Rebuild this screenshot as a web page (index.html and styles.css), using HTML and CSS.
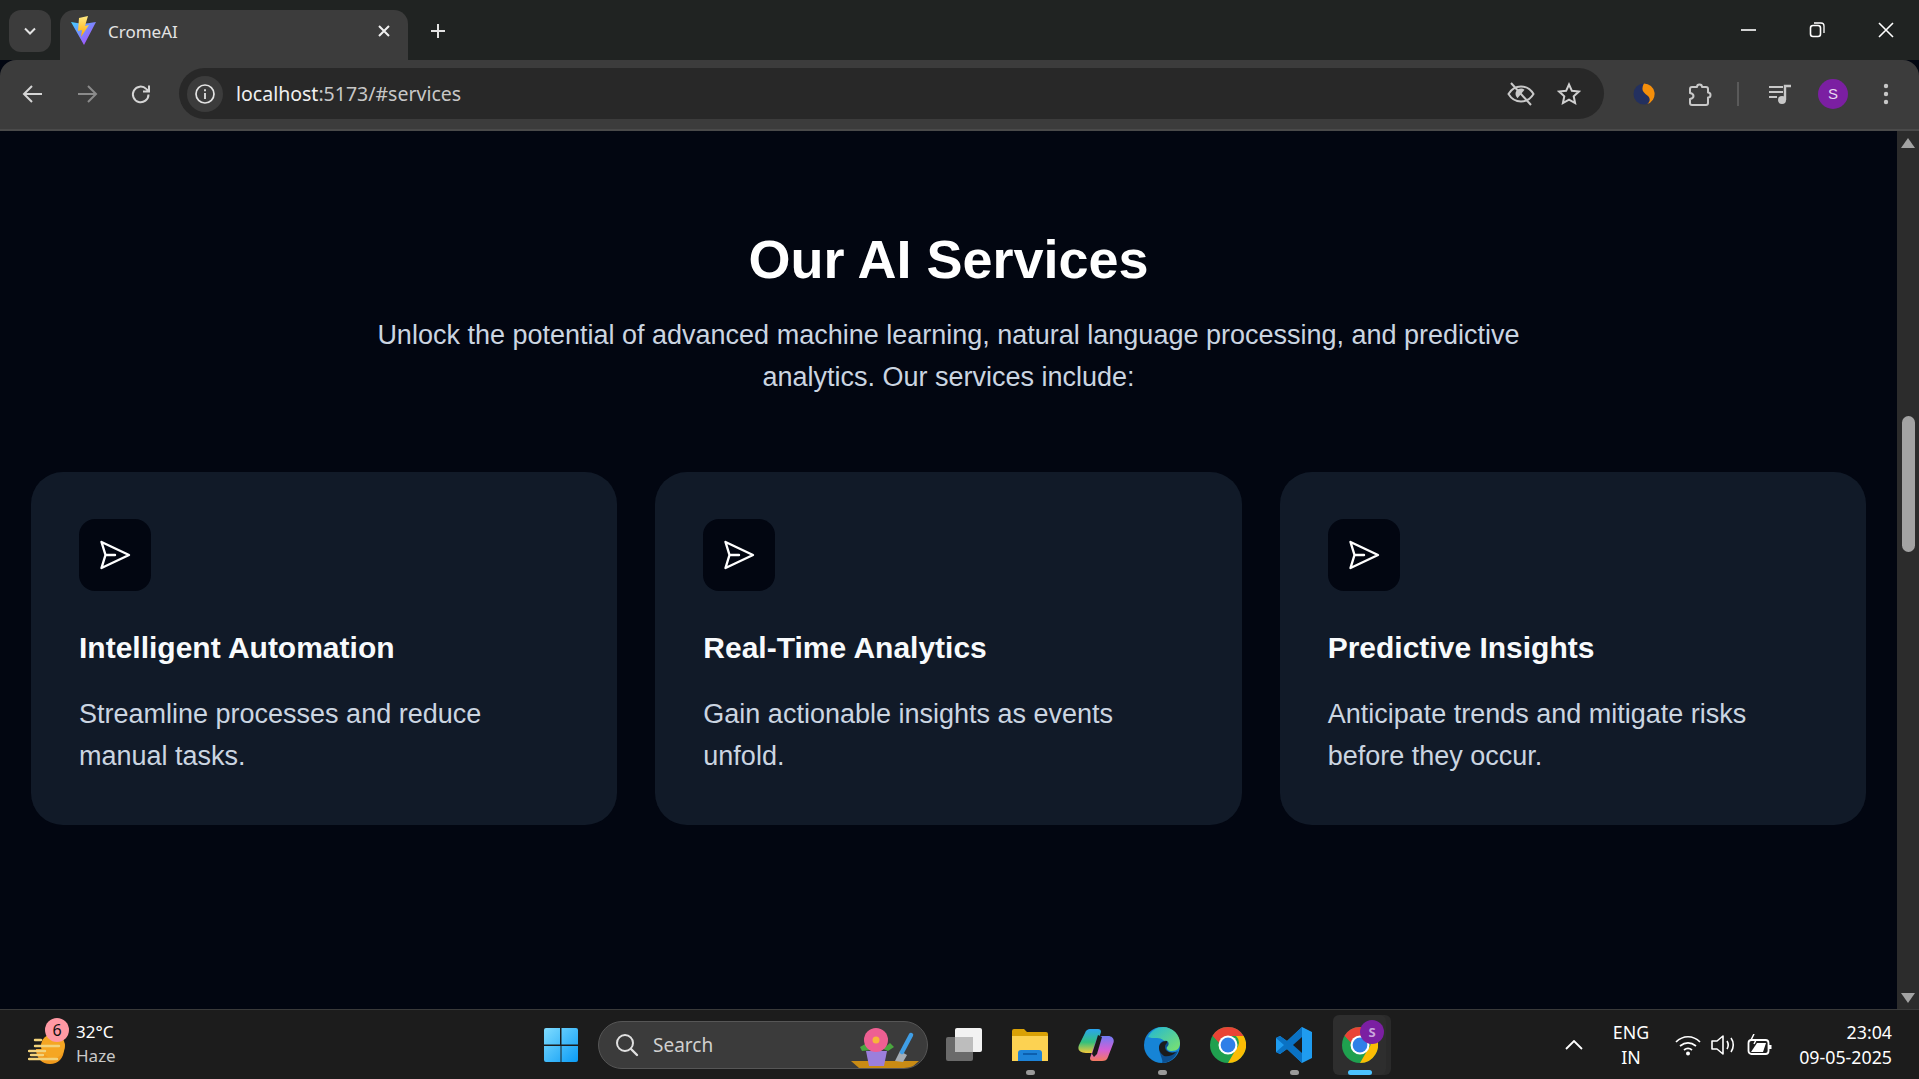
FILE: index.html
```html
<!DOCTYPE html>
<html lang="en">
<head>
    <meta charset="UTF-8">
    <title>CromeAI</title>
    <link rel="stylesheet" href="styles.css">
</head>
<body>

    <!-- Tab strip -->
    <div class="tabstrip">
        <button class="tab-search"><svg width="16" height="16" viewBox="0 0 16 16"><path d="M3 5.500l5 5 5-5" fill="none" stroke="#e3e3e3" stroke-width="2"/></svg></button>
        <div class="tab">
            <svg class="favicon" width="26" height="30" viewBox="0 0 26 30">
                <defs>
                    <linearGradient id="viteA" x1="0" y1="0" x2="1" y2="1"><stop offset="0" stop-color="#41d1ff"/><stop offset="1" stop-color="#bd34fe"/></linearGradient>
                    <linearGradient id="viteB" x1="0" y1="0" x2="0" y2="1"><stop offset="0" stop-color="#ffea83"/><stop offset="1" stop-color="#ffa800"/></linearGradient>
                </defs>
                <path d="M0 6l12 2 13-2-12 23z" fill="url(#viteA)"/>
                <path d="M17 0L8 2l-1 13 4-1-1 7 8-12-4 1 3-10z" fill="url(#viteB)"/>
            </svg>
            <span class="tab-title">CromeAI</span>
            <svg class="tab-close" width="14" height="14" viewBox="0 0 14 14"><path d="M2 2l10 10M12 2L2 12" stroke="#f0f0f0" stroke-width="2"/></svg>
        </div>
        <svg class="new-tab" width="18" height="18" viewBox="0 0 18 18"><path d="M9 2v14M2 9h14" stroke="#e3e3e3" stroke-width="2"/></svg>
        <div class="window-controls">
            <svg width="18" height="18" viewBox="0 0 18 18"><path d="M2 9h15" stroke="#fff" stroke-width="1.600"/></svg>
            <svg width="18" height="18" viewBox="0 0 18 18"><rect x="2.500" y="4.500" width="10" height="11" rx="2.500" fill="none" stroke="#fff" stroke-width="1.600"/><path d="M6 2h7a3 3 0 0 1 3 3v7" fill="none" stroke="#fff" stroke-width="1.300"/></svg>
            <svg width="18" height="18" viewBox="0 0 18 18"><path d="M2 2l14 14M16 2L2 16" stroke="#fff" stroke-width="1.600"/></svg>
        </div>
    </div>

    <!-- Toolbar -->
    <div class="toolbar">
        <svg class="nav-btn" width="22" height="22" viewBox="0 0 22 22"><path d="M20 11H3M10 3l-8 8 8 8" fill="none" stroke="#d5d5d5" stroke-width="2"/></svg>
        <svg class="nav-btn" width="22" height="22" viewBox="0 0 22 22"><path d="M2 11h17M12 3l8 8-8 8" fill="none" stroke="#8b8b8b" stroke-width="2"/></svg>
        <svg class="nav-btn" width="22" height="22" viewBox="0 0 22 22"><path d="M18.500 11.500a7.800 7.800 0 1 1-2.300-5.600L19 8.500M19 2.500v6h-6" fill="none" stroke="#d5d5d5" stroke-width="2"/></svg>
        <div class="omnibox">
            <span class="info-chip"><svg width="22" height="22" viewBox="0 0 22 22"><circle cx="11" cy="11" r="9" fill="none" stroke="#e3e3e3" stroke-width="1.700"/><path d="M11 10v6M11 6.200v2" stroke="#e3e3e3" stroke-width="1.800"/></svg></span>
            <span class="url">localhost<span class="url-rest">:5173/#services</span></span>
            <svg class="omni-eye" width="28" height="24" viewBox="0 0 28 24"><path d="M1.500 12c3-5 7-7.500 12.500-7.500S23.500 7 26.500 12c-3 5-7 7.500-12.500 7.500S4.500 17 1.500 12z" fill="none" stroke="#c8c8c8" stroke-width="2"/><path d="M8.500 12a5.500 5.500 0 0 1 9-4.200l-7 8.400a5.500 5.500 0 0 1-2-4.200z" fill="#c8c8c8"/><path d="M4 1l20 22" stroke="#c8c8c8" stroke-width="2"/></svg>
            <svg class="omni-star" width="24" height="24" viewBox="0 0 24 24"><path d="M12 2.500l2.900 6.300 6.900.8-5.100 4.700 1.400 6.800L12 17.700l-6.100 3.400 1.400-6.800L2.200 9.600l6.900-.8z" fill="none" stroke="#d0d0d0" stroke-width="2"/></svg>
        </div>
        <svg class="ext-simplenote" width="22" height="22" viewBox="0 0 22 22"><circle cx="11" cy="11" r="10.500" fill="#23305f"/><path d="M11 .5a10.500 10.500 0 0 1 3 20.600c3-2 3.500-5 1.500-7.500C13.500 11 9 9.500 9.500 5c.2-2 1-3.700 1.500-4.500z" fill="#f58f0a"/></svg>
        <svg class="ext-puzzle" width="24" height="26" viewBox="0 0 24 26"><path d="M2 8a2 2 0 0 1 2-2h5a2.500 2.500 0 0 1 5 0h4a2 2 0 0 1 2 2v3.500a2.500 2.500 0 0 1 0 5V22a2 2 0 0 1-2 2H4a2 2 0 0 1-2-2v-4c2.500-.5 3.500-1.500 3.500-3S4.500 12.500 2 12z" fill="none" stroke="#c8c8c8" stroke-width="2" stroke-linejoin="round"/></svg>
        <span class="toolbar-sep"></span>
        <svg class="ext-media" width="24" height="22" viewBox="0 0 24 22"><path d="M1 4h14M1 9h14M1 14h8" stroke="#c8c8c8" stroke-width="2"/><path d="M17 17V3h6" fill="none" stroke="#c8c8c8" stroke-width="2.400"/><circle cx="14" cy="17" r="4" fill="#c8c8c8"/></svg>
        <span class="avatar">S</span>
        <svg class="menu-dots" width="6" height="24" viewBox="0 0 6 24"><circle cx="3" cy="4" r="2.200" fill="#c8c8c8"/><circle cx="3" cy="12" r="2.200" fill="#c8c8c8"/><circle cx="3" cy="20" r="2.200" fill="#c8c8c8"/></svg>
    </div>

    <!-- Page -->
    <div class="viewport">
        <main class="page">
            <section class="services">
                <h1>Our AI Services</h1>
                <p class="lead">Unlock the potential of advanced machine learning, natural language processing, and predictive analytics. Our services include:</p>
                <div class="card-grid">
                    <div class="card">
                        <div class="card-icon"><svg width="32" height="32" viewBox="0 0 32 32"><path d="M2.500 3L30 16 2.500 29 6.500 16zM6.500 16H16" fill="none" stroke="#fff" stroke-width="2.400" stroke-linejoin="round" stroke-linecap="round"/></svg></div>
                        <h3>Intelligent Automation</h3>
                        <p>Streamline processes and reduce manual tasks.</p>
                    </div>
                    <div class="card">
                        <div class="card-icon"><svg width="32" height="32" viewBox="0 0 32 32"><path d="M2.500 3L30 16 2.500 29 6.500 16zM6.500 16H16" fill="none" stroke="#fff" stroke-width="2.400" stroke-linejoin="round" stroke-linecap="round"/></svg></div>
                        <h3>Real-Time Analytics</h3>
                        <p>Gain actionable insights as events unfold.</p>
                    </div>
                    <div class="card">
                        <div class="card-icon"><svg width="32" height="32" viewBox="0 0 32 32"><path d="M2.500 3L30 16 2.500 29 6.500 16zM6.500 16H16" fill="none" stroke="#fff" stroke-width="2.400" stroke-linejoin="round" stroke-linecap="round"/></svg></div>
                        <h3>Predictive Insights</h3>
                        <p>Anticipate trends and mitigate risks before they occur.</p>
                    </div>
                </div>
            </section>
        </main>
        <div class="scrollbar">
            <span class="arrow-up"></span>
            <span class="thumb"></span>
            <span class="arrow-down"></span>
        </div>
    </div>

    <!-- Windows taskbar -->
    <footer class="taskbar">
        <div class="weather">
            <div class="weather-icon">
                <svg width="38" height="36" viewBox="0 0 38 36"><path d="M8 20h28c0 9-6 15-14 15S8 29 8 20z" fill="#f09a1c"/><circle cx="25" cy="17" r="12" fill="#f5a623"/><path d="M7 11h6M7 17h24M1 22h16M3 26h12M1 30h28" stroke="#f2d37c" stroke-width="2.400" stroke-linecap="round"/></svg>
                <span class="weather-badge">6</span>
            </div>
            <div class="weather-text">
                <span class="temp">32°C</span>
                <span class="cond">Haze</span>
            </div>
        </div>
        <div class="task-center">
            <svg class="win-logo" width="36" height="36" viewBox="0 0 36 36">
                <defs><linearGradient id="winG" x1="0" y1="0" x2="1" y2="1"><stop offset="0" stop-color="#7fdcff"/><stop offset="1" stop-color="#0a9bf5"/></linearGradient></defs>
                <path d="M1 3a2 2 0 0 1 2-2h14v16.500H1zM18.500 1H33a2 2 0 0 1 2 2v14.500H18.500zM1 19h16.500v16H3a2 2 0 0 1-2-2zM18.500 19H35v14a2 2 0 0 1-2 2H18.500z" fill="url(#winG)"/>
            </svg>
            <div class="search-box">
                <svg width="24" height="24" viewBox="0 0 24 24"><circle cx="10" cy="10" r="8" fill="none" stroke="#e0e0e0" stroke-width="2"/><path d="M16 16l6 6" stroke="#e0e0e0" stroke-width="2.400" stroke-linecap="round"/></svg>
                <span class="search-text">Search</span>
                <svg class="search-art" width="68" height="40" viewBox="0 0 68 40">
                    <path d="M0 33h68l-8 7H8z" fill="#c98b14"/>
                    <path d="M15 23h21l-3 15H18z" fill="#9b7fdc"/>
                    <path d="M9 19l7-4 4 7-9 1zM32 21l7-6 4 4-6 4z" fill="#4aa63e"/>
                    <circle cx="25" cy="12" r="12" fill="#ee5f92"/><circle cx="25" cy="12" r="3.500" fill="#f7b53a"/>
                    <path d="M44 33l5-10 7 4-4 7z" fill="#a5adb5"/><path d="M51 24l9-17" stroke="#3f9ee6" stroke-width="4.500" stroke-linecap="round"/>
                </svg>
            </div>
            <div class="task-app">
                <svg width="36" height="34" viewBox="0 0 36 34"><rect x="0" y="9" width="27" height="24" rx="2" fill="#6a6a6a"/><rect x="9" y="0" width="27" height="24" rx="2" fill="#f2f2f2"/><rect x="9" y="9" width="18" height="15" fill="#bdbdbd"/></svg>
            </div>
            <div class="task-app running">
                <svg width="36" height="34" viewBox="0 0 36 34"><path d="M0 3a2 2 0 0 1 2-2h10l3 3h19a2 2 0 0 1 2 2v4H0z" fill="#d9a106"/><path d="M0 8h36v25H0z" fill="#fcd252"/><path d="M6 33v-8a3 3 0 0 1 3-3h18a3 3 0 0 1 3 3v8z" fill="#1d83d8"/><path d="M11 26h14" stroke="#0c5fae" stroke-width="2"/></svg>
            </div>
            <div class="task-app">
                <svg width="36" height="34" viewBox="0 0 36 34">
                    <defs>
                        <linearGradient id="copA" x1="0" y1="0" x2="0" y2="1"><stop offset="0" stop-color="#2aa4f0"/><stop offset=".55" stop-color="#33c07d"/><stop offset="1" stop-color="#f4c93a"/></linearGradient>
                        <linearGradient id="copB" x1="0" y1="0" x2="0" y2="1"><stop offset="0" stop-color="#6f7cf5"/><stop offset=".55" stop-color="#d45fd5"/><stop offset="1" stop-color="#f47a60"/></linearGradient>
                    </defs>
                    <path d="M12 1h8c2 0 3 1 3 3l-7 21H8c-6 0-9-3-7-8L7 5c1-3 3-4 5-4z" fill="url(#copA)"/>
                    <path d="M24 8h6c5 0 7 4 5 8l-5 13c-1 3-3 4-6 4h-9c-2 0-3-1-3-3l7-20c1-1 3-2 5-2z" fill="url(#copB)"/>
                    <path d="M20 7l-6 19 2 3 3-3 5-17z" fill="#1b1b1b"/>
                </svg>
            </div>
            <div class="task-app running">
                <svg width="36" height="36" viewBox="0 0 36 36">
                    <defs><linearGradient id="edgeA" x1="0" y1="0" x2="1" y2="1"><stop offset="0" stop-color="#1fb6d8"/><stop offset="1" stop-color="#7fe36a"/></linearGradient></defs>
                    <circle cx="18" cy="18" r="18" fill="#1684d6"/>
                    <path d="M4 10C8 3 13 0 19 0c10 0 17 8 17 16 0 5-3 8-8 8-4 0-6-2-5-5-1-5-5-8-10-8-4 0-7 0-9-1z" fill="url(#edgeA)"/>
                    <path d="M15 21c0-5 3-8 8-7 2 1 2 3 1 5-2 1-2 3-1 4 2 3 7 3 11 1-3 8-10 12-16 12 2-2-3-9-3-15z" fill="#0d4f8f"/>
                    <path d="M15 21c0-4 3-7 8-7 1 2-2 3-2 6 0 4 5 7 11 5-3 4-9 5-12 4-3-2-5-5-5-8z" fill="#1b1b1b"/>
                </svg>
            </div>
            <div class="task-app">
                <svg width="36" height="36" viewBox="0 0 36 36"><use href="#chromeIcon"/></svg>
            </div>
            <div class="task-app running">
                <svg width="36" height="36" viewBox="0 0 36 36"><path d="M26 0l10 5v26l-10 5-15-14-7 5-4-2V11l4-2 7 5z" fill="#1f9cf0"/><path d="M26 0v36L11 22l-7 5-4-2 8-7-8-7 4-2 7 5z" fill="#0a72c4"/><path d="M26 10l-9 8 9 8z" fill="#1b1b1b"/></svg>
            </div>
            <div class="task-app active">
                <svg width="36" height="36" viewBox="0 0 36 36">
                    <g id="chromeIcon">
                        <circle cx="18" cy="18" r="18" fill="#1fa04f"/>
                        <path d="M18 0a18 18 0 0 1 15.600 9H18a9 9 0 0 0-8.800 7L2.500 8.800A18 18 0 0 1 18 0z" fill="#e94335"/>
                        <path d="M33.600 9A18 18 0 0 1 18 36l7.800-13.500A9 9 0 0 0 26 9z" fill="#fbbc04"/>
                        <circle cx="18" cy="18" r="9.500" fill="#fff"/>
                        <circle cx="18" cy="18" r="7.400" fill="#2f7fe8"/>
                    </g>
                </svg>
                <span class="chrome-badge">S</span>
            </div>
        </div>
        <div class="tray">
            <svg class="tray-up" width="18" height="10" viewBox="0 0 18 10"><path d="M1 9l8-8 8 8" fill="none" stroke="#fff" stroke-width="1.800"/></svg>
            <div class="lang"><span>ENG</span><span>IN</span></div>
            <div class="tray-icons">
                <svg width="26" height="22" viewBox="0 0 26 22"><path d="M1 8c7-7 17-7 24 0M5 12c5-4 11-4 16 0M9 16c2.500-2 5.500-2 8 0" fill="none" stroke="#fff" stroke-width="1.700"/><circle cx="13" cy="19.500" r="2" fill="#fff"/></svg>
                <svg width="26" height="22" viewBox="0 0 26 22"><path d="M1 7h5l6-5v18l-6-5H1z" fill="none" stroke="#fff" stroke-width="1.600" stroke-linejoin="round"/><path d="M16 7c1.500 2.500 1.500 5.500 0 8M20 4c3 4 3 10 0 14" fill="none" stroke="#fff" stroke-width="1.600"/></svg>
                <svg width="26" height="22" viewBox="0 0 26 22"><rect x="1.500" y="6" width="20" height="14" rx="3" fill="none" stroke="#fff" stroke-width="1.800"/><path d="M23 11v4" stroke="#fff" stroke-width="3"/><path d="M4 18l6-9h9l-3 9z" fill="#fff"/><path d="M7 0L4 6h5L7 10" fill="none" stroke="#fff" stroke-width="1.500"/></svg>
            </div>
            <div class="clock"><span>23:04</span><span>09-05-2025</span></div>
        </div>
    </footer>

</body>
</html>
```

FILE: styles.css
```css
* {
    box-sizing: border-box;
}
html, body {
    height: 100%;
}
body {
    margin: 0;
    display: flex;
    flex-direction: column;
    overflow: hidden;
    font-family: "Liberation Sans", Arial, sans-serif;
    background-color: #020611;
    color: #fff;
}

/* browser chrome */
.tabstrip {
    height: 60px;
    flex: none;
    background-color: #202322;
    display: flex;
    align-items: flex-start;
    padding: 10px 0 0 9px;
}
.tab-search {
    width: 42px;
    height: 42px;
    border: none;
    border-radius: 12px;
    background-color: #3c3c3c;
    display: flex;
    align-items: center;
    justify-content: center;
    padding: 0;
}
.tab {
    width: 348px;
    height: 50px;
    margin-left: 9px;
    background-color: #3c3c3c;
    border-radius: 14px 14px 0 0;
    display: flex;
    align-items: center;
    padding: 0 17px 8px 11px;
}
.tab-title {
    margin-left: 11px;
    font-family: "Noto Sans", sans-serif;
    font-size: 17px;
    color: #e3e3e3;
    flex: 1;
}
.new-tab {
    margin: 12px 0 0 21px;
}
.window-controls {
    margin-left: auto;
    display: flex;
    gap: 51px;
    padding: 11px 24px 0 0;
}
.toolbar {
    height: 71px;
    flex: none;
    background-color: #3c3c3c;
    border-bottom: 2px solid #4a4a4a;
    border-radius: 16px 16px 0 0;
    display: flex;
    align-items: center;
    padding: 0 0 2px 22px;
}
.nav-btn {
    margin-right: 32px;
}
.nav-btn:nth-child(3) {
    margin-right: 27px;
}
.omnibox {
    width: 1425px;
    height: 51px;
    background-color: #282828;
    border-radius: 26px;
    display: flex;
    align-items: center;
    padding: 0 23px 0 8px;
}
.info-chip {
    width: 36px;
    height: 36px;
    border-radius: 50%;
    background-color: #3c3c3c;
    display: flex;
    align-items: center;
    justify-content: center;
}
.url {
    margin-left: 13px;
    font-family: "Noto Sans", sans-serif;
    font-size: 19.500px;
    color: #f0f0f0;
    flex: 1;
}
.url-rest {
    color: #c7c7c7;
}
.omni-star {
    margin-left: 22px;
}
.ext-simplenote {
    margin-left: 29px;
}
.ext-puzzle {
    margin-left: 33px;
}
.toolbar-sep {
    width: 2px;
    height: 24px;
    margin-left: 25px;
    background-color: #5a5a5a;
}
.ext-media {
    margin-left: 29px;
}
.avatar {
    width: 30px;
    height: 30px;
    margin-left: 26px;
    border-radius: 50%;
    background-color: #7b1fa2;
    color: #e8d8f0;
    font-size: 15px;
    display: flex;
    align-items: center;
    justify-content: center;
}
.menu-dots {
    margin-left: 35px;
}

/* page */
.viewport {
    flex: 1;
    min-height: 0;
    display: flex;
}
.page {
    flex: 1;
    min-width: 0;
}
.services {
    padding: 96px 31px 0;
    text-align: center;
}
h1 {
    margin: 0;
    font-size: 54px;
    line-height: 64px;
    font-weight: 700;
}
.lead {
    width: 1200px;
    margin: 23px auto 0;
    font-size: 27px;
    line-height: 42px;
    color: #cbd5e1;
}
.card-grid {
    display: grid;
    grid-template-columns: repeat(3, 1fr);
    gap: 38px;
    margin-top: 74px;
    text-align: left;
}
.card {
    height: 353px;
    padding: 47px 48px 0;
    background-color: #111a28;
    border-radius: 32px;
}
.card-icon {
    width: 72px;
    height: 72px;
    background-color: #020611;
    border-radius: 16px;
    display: flex;
    align-items: center;
    justify-content: center;
}
.card h3 {
    margin: 37px 0 0;
    font-size: 30px;
    line-height: 40px;
    font-weight: 700;
    color: #f8fafc;
}
.card p {
    margin: 25px 0 0;
    font-size: 27px;
    line-height: 42px;
    color: #cbd5e1;
}
.scrollbar {
    width: 22px;
    flex: none;
    background-color: #2c2c2c;
    display: flex;
    flex-direction: column;
    align-items: center;
    padding-top: 7px;
}
.arrow-up {
    border-left: 7px solid transparent;
    border-right: 7px solid transparent;
    border-bottom: 10px solid #a3a3a3;
}
.thumb {
    width: 13px;
    height: 136px;
    margin-top: 268px;
    background-color: #a3a3a3;
    border-radius: 7px;
}
.arrow-down {
    margin-top: auto;
    margin-bottom: 6px;
    border-left: 7px solid transparent;
    border-right: 7px solid transparent;
    border-top: 10px solid #a3a3a3;
}

/* taskbar */
.taskbar {
    height: 70px;
    flex: none;
    background-color: #1c1c1c;
    border-top: 1px solid #3a3a3a;
    display: flex;
    align-items: center;
    font-family: "Noto Sans", sans-serif;
}
.weather {
    display: flex;
    align-items: center;
    width: 543px;
    padding-left: 28px;
}
.weather-icon {
    position: relative;
    width: 38px;
    height: 36px;
    margin-top: 4px;
}
.weather-badge {
    position: absolute;
    top: -11px;
    left: 17px;
    width: 24px;
    height: 24px;
    border-radius: 50%;
    background-color: #ff99a4;
    color: #111;
    font-size: 16px;
    display: flex;
    align-items: center;
    justify-content: center;
}
.weather-text {
    display: flex;
    flex-direction: column;
    margin: -2px 0 0 10px;
    font-size: 17px;
    line-height: 24px;
}
.cond {
    color: #c8c8c8;
}
.task-center {
    display: flex;
    align-items: center;
}
.win-logo {
    margin-right: 19px;
}
.search-box {
    width: 330px;
    height: 48px;
    border-radius: 24px;
    background-color: #3b3b3b;
    border: 1px solid #565656;
    display: flex;
    align-items: center;
    padding: 0 0 0 16px;
    margin-right: 3px;
    overflow: hidden;
}
.search-text {
    margin-left: 14px;
    font-size: 19px;
    color: #d0d0d0;
    flex: 1;
}
.search-art {
    margin: 0 8px 0 0;
    align-self: flex-end;
}
.task-app {
    position: relative;
    width: 66px;
    height: 60px;
    display: flex;
    align-items: center;
    justify-content: center;
}
.task-app.running::after {
    content: "";
    position: absolute;
    left: 29px;
    bottom: 0;
    width: 9px;
    height: 5px;
    border-radius: 3px;
    background-color: #9a9a9a;
}
.task-app.active {
    width: 53px;
    margin-left: 6px;
    background-color: #2e2e2e;
    border-radius: 6px;
    box-shadow: 5px 0 0 #2a2a2a;
}
.task-app.active::after {
    content: "";
    position: absolute;
    left: 15px;
    bottom: 0;
    width: 24px;
    height: 5px;
    border-radius: 3px;
    background-color: #4cc2ff;
}
.chrome-badge {
    position: absolute;
    top: 5px;
    right: 2px;
    width: 24px;
    height: 24px;
    border-radius: 50%;
    background-color: #7b1fa2;
    color: #c9a6dd;
    font-size: 13px;
    font-weight: 700;
    display: flex;
    align-items: center;
    justify-content: center;
}
.tray {
    margin-left: auto;
    display: flex;
    align-items: center;
    padding-right: 27px;
    color: #fff;
    font-size: 17.800px;
    line-height: 25px;
}
.tray-up {
    margin-right: 30px;
}
.lang {
    display: flex;
    flex-direction: column;
    align-items: center;
    margin-right: 26px;
}
.tray-icons {
    display: flex;
    gap: 10px;
    margin-right: 26px;
}
.clock {
    display: flex;
    flex-direction: column;
    align-items: flex-end;
}
```
